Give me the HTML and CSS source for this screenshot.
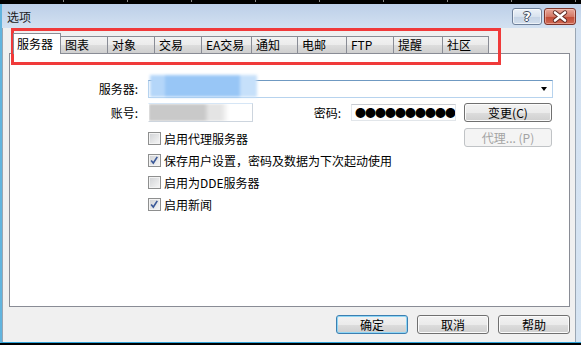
FILE: index.html
```html
<!DOCTYPE html>
<html lang="zh-CN">
<head>
  <meta charset="UTF-8">
  <title>选项</title>
  <link rel="stylesheet" href="styles.css">
</head>
<body>
  <div class="screen">
    <div class="chart-strip"></div>

    <div class="window">
      <div class="titlebar">
        <span class="title">选项</span>
        <div class="caption-btns">
          <button class="cap cap-help">?</button>
          <button class="cap cap-close">
            <svg viewBox="0 0 32 17" width="32" height="17">
              <path d="M11 4.5l10 8M21 4.5l-10 8" stroke="#5a2620" stroke-width="4.4" stroke-linecap="round"/>
              <path d="M11 4.5l10 8M21 4.5l-10 8" stroke="#fff" stroke-width="2.6" stroke-linecap="round"/>
            </svg>
          </button>
        </div>
      </div>

      <div class="client">
        <div class="tabs">
          <div class="tab active">服务器</div>
          <div class="tab">图表</div>
          <div class="tab">对象</div>
          <div class="tab">交易</div>
          <div class="tab tab-wide">EA交易</div>
          <div class="tab tab-narrow">通知</div>
          <div class="tab tab-mid">电邮</div>
          <div class="tab">FTP</div>
          <div class="tab tab-mid">提醒</div>
          <div class="tab tab-narrow">社区</div>
        </div>

        <div class="panel">
          <div class="row row-server">
            <span class="lbl">服务器:</span>
            <div class="combo">
              <span class="blur-sel"></span>
              <span class="combo-arrow"></span>
            </div>
          </div>

          <div class="row row-account">
            <span class="lbl">账号:</span>
            <div class="input input-account"><span class="blur-gray"></span></div>
            <span class="pwd-lbl">密码:</span>
            <div class="input input-pwd">●●●●●●●●●●</div>
            <button class="btn btn-side">变更(C)</button>
          </div>

          <div class="options">
            <div class="checks">
              <label class="check"><span class="box"></span>启用代理服务器</label>
              <label class="check"><span class="box checked"><svg viewBox="0 0 13 13" width="11" height="11"><path d="M2.5 6.5l2.6 3L9.8 2.2" fill="none" stroke="#3b5998" stroke-width="1.9"/></svg></span>保存用户设置，密码及数据为下次起动使用</label>
              <label class="check"><span class="box"></span>启用为DDE服务器</label>
              <label class="check"><span class="box checked"><svg viewBox="0 0 13 13" width="11" height="11"><path d="M2.5 6.5l2.6 3L9.8 2.2" fill="none" stroke="#3b5998" stroke-width="1.9"/></svg></span>启用新闻</label>
            </div>
            <button class="btn btn-proxy" disabled>代理... (P)</button>
          </div>
        </div>

        <div class="footer">
          <button class="btn btn-default">确定</button>
          <button class="btn">取消</button>
          <button class="btn">帮助</button>
        </div>
      </div>
    </div>

    <div class="highlight"></div>
  </div>
</body>
</html>
```

FILE: styles.css
```css
body {
  margin: 0;
  background: #000;
  font-family: "Noto Sans CJK SC", "Noto Sans", sans-serif;
  font-size: 12px;
  color: #000;
}
.screen {
  position: relative;
  width: 581px;
  height: 345px;
  overflow: hidden;
}
.chart-strip {
  height: 4px;
  background: repeating-linear-gradient(90deg, transparent 0 63px, #8a8a8a 63px 64px) top left / 100% 2px no-repeat, #000;
}
.window {
  height: 339px;
  box-sizing: border-box;
  border-left: 2px solid #62b4de;
  border-bottom: 1px solid #2fa4da;
  background: linear-gradient(#bccfe8, #d3e1f1 24px, #d6e4f2);
  display: flex;
  flex-direction: column;
}
.titlebar {
  height: 24px;
  flex: none;
  box-sizing: border-box;
  padding: 4px 5px 0 5px;
  display: flex;
  justify-content: space-between;
  align-items: flex-start;
}
.title {
  line-height: 17px;
  color: #1b1b1b;
}
.caption-btns {
  display: flex;
  gap: 2px;
}
.cap {
  height: 17px;
  padding: 0;
  border-radius: 3px;
  box-sizing: border-box;
}
.cap-help {
  width: 30px;
  border: 1px solid #6f819b;
  background: linear-gradient(#eef3f9, #d9e3ef 50%, #c5d3e5 51%, #d3dfed);
  box-shadow: inset 0 0 0 1px rgba(255, 255, 255, 0.6);
  font: bold 13px/15px "DejaVu Sans", sans-serif;
  color: #fff;
  text-shadow: -1px 0 #3d4a5c, 1px 0 #3d4a5c, 0 -1px #3d4a5c, 0 1px #3d4a5c;
}
.cap-close {
  width: 32px;
  border: 1px solid #7e342a;
  background: linear-gradient(#e9a99c, #d47866 50%, #c04a35 51%, #d06a55);
  box-shadow: inset 0 0 0 1px rgba(255, 220, 210, 0.45);
}
.cap-close svg {
  display: block;
  margin: -1px;
}
.client {
  flex: 1;
  margin-right: 5px;
  border-left: 1px solid #9aa6b3;
  border-right: 1px solid #9aa6b3;
  background: #f0f0f0;
  padding: 5px 5px 0 6px;
}
.tabs {
  display: flex;
  align-items: flex-end;
  height: 20px;
  padding-left: 4px;
}
.tab {
  width: 48px;
  height: 17px;
  box-sizing: border-box;
  margin-left: -1px;
  padding-left: 4px;
  border: 1px solid #898c95;
  border-bottom: none;
  background: linear-gradient(#f2f2f2, #ebebeb 50%, #dddddd 51%, #cfcfcf);
  line-height: 16px;
  white-space: nowrap;
}
.tab:first-child {
  margin-left: 0;
}
.tab-wide { width: 51px; }
.tab-mid { width: 50px; }
.tab-narrow { width: 47px; }
.tab.active {
  position: relative;
  z-index: 1;
  height: 21px;
  margin-bottom: -1px;
  background: #fff;
  line-height: 20px;
  padding-left: 3px;
}
.panel {
  height: 254px;
  box-sizing: border-box;
  border: 1px solid #898c95;
  background: #fff;
  padding-top: 26px;
}
.row {
  display: flex;
  align-items: center;
}
.lbl {
  width: 128px;
  text-align: right;
  line-height: 16px;
}
.row-server {
  height: 18px;
}
.combo {
  position: relative;
  width: 405px;
  height: 18px;
  box-sizing: border-box;
  margin-left: 10px;
  border: 1px solid #b7d3ee;
  border-top-color: #6f99c2;
  background: #fff;
}
.blur-sel {
  position: absolute;
  left: 1px;
  top: -6px;
  width: 107px;
  height: 22px;
  background: linear-gradient(90deg, #b4d6f9 0 14%, #98c6f6 14% 84%, #c6e0fa 84%);
  filter: blur(1.5px);
}
.combo-arrow {
  position: absolute;
  right: 5px;
  top: 6px;
  border-left: 3.5px solid transparent;
  border-right: 3.5px solid transparent;
  border-top: 4px solid #000;
}
.row-account {
  margin-top: 5px;
  height: 19px;
}
.input {
  box-sizing: border-box;
  border: 1px solid #cdd5de;
  border-top-color: #abadb3;
  background: #fff;
  overflow: hidden;
}
.input-account {
  width: 105px;
  height: 19px;
  margin-left: 10px;
  border-left-color: transparent;
  border-top-color: #d6e6f6;
}
.blur-gray {
  display: block;
  width: 100px;
  height: 17px;
  background: linear-gradient(90deg, #c9c9c9 0 55%, #e4e4e4 60% 72%, #fff 80%);
  filter: blur(1px);
}
.pwd-lbl {
  width: 88px;
  text-align: right;
  line-height: 16px;
}
.input-pwd {
  width: 105px;
  height: 17px;
  margin-left: 10px;
  padding-left: 3px;
  font-size: 11px;
  line-height: 15px;
  letter-spacing: -1px;
  white-space: nowrap;
  border-color: #e2e6ea;
  border-top-color: #c9ccd2;
}
.btn {
  width: 72px;
  height: 19px;
  box-sizing: border-box;
  padding: 0;
  font: inherit;
  line-height: 16px;
  color: #000;
  border: 1px solid #707070;
  border-radius: 3px;
  background: linear-gradient(#f2f2f2, #ebebeb 50%, #dddddd 51%, #cfcfcf);
  box-shadow: inset 0 0 0 1px #fbfbfb;
}
.btn-side {
  width: 88px;
  margin-left: 8px;
}
.btn-proxy {
  width: 88px;
  margin-top: 1px;
}
.btn:disabled {
  color: #a3a3a3;
  border-color: #c0c3c6;
  background: #f4f4f4;
  box-shadow: none;
}
.btn-default {
  border-color: #3c7fb1;
  box-shadow: inset 0 0 0 1px #8fd6f5;
}
.options {
  display: flex;
  align-items: flex-start;
  margin-top: 5px;
}
.checks {
  width: 316px;
  margin-left: 138px;
}
.check {
  display: flex;
  align-items: center;
  gap: 3px;
  height: 22px;
  white-space: nowrap;
}
.box {
  width: 13px;
  height: 13px;
  box-sizing: border-box;
  border: 1px solid #8e8f8f;
  background: linear-gradient(135deg, #cfd1d4, #f7f7f7);
  box-shadow: inset 0 0 0 1px #f3f3f3;
  display: flex;
  align-items: center;
  justify-content: center;
}
.box svg {
  display: block;
}
.footer {
  display: flex;
  justify-content: flex-end;
  gap: 9px;
  margin-top: 8px;
}
.highlight {
  position: absolute;
  left: 11px;
  top: 28px;
  width: 490px;
  height: 37px;
  box-sizing: border-box;
  border: 3px solid #f03a3a;
  pointer-events: none;
}
```
